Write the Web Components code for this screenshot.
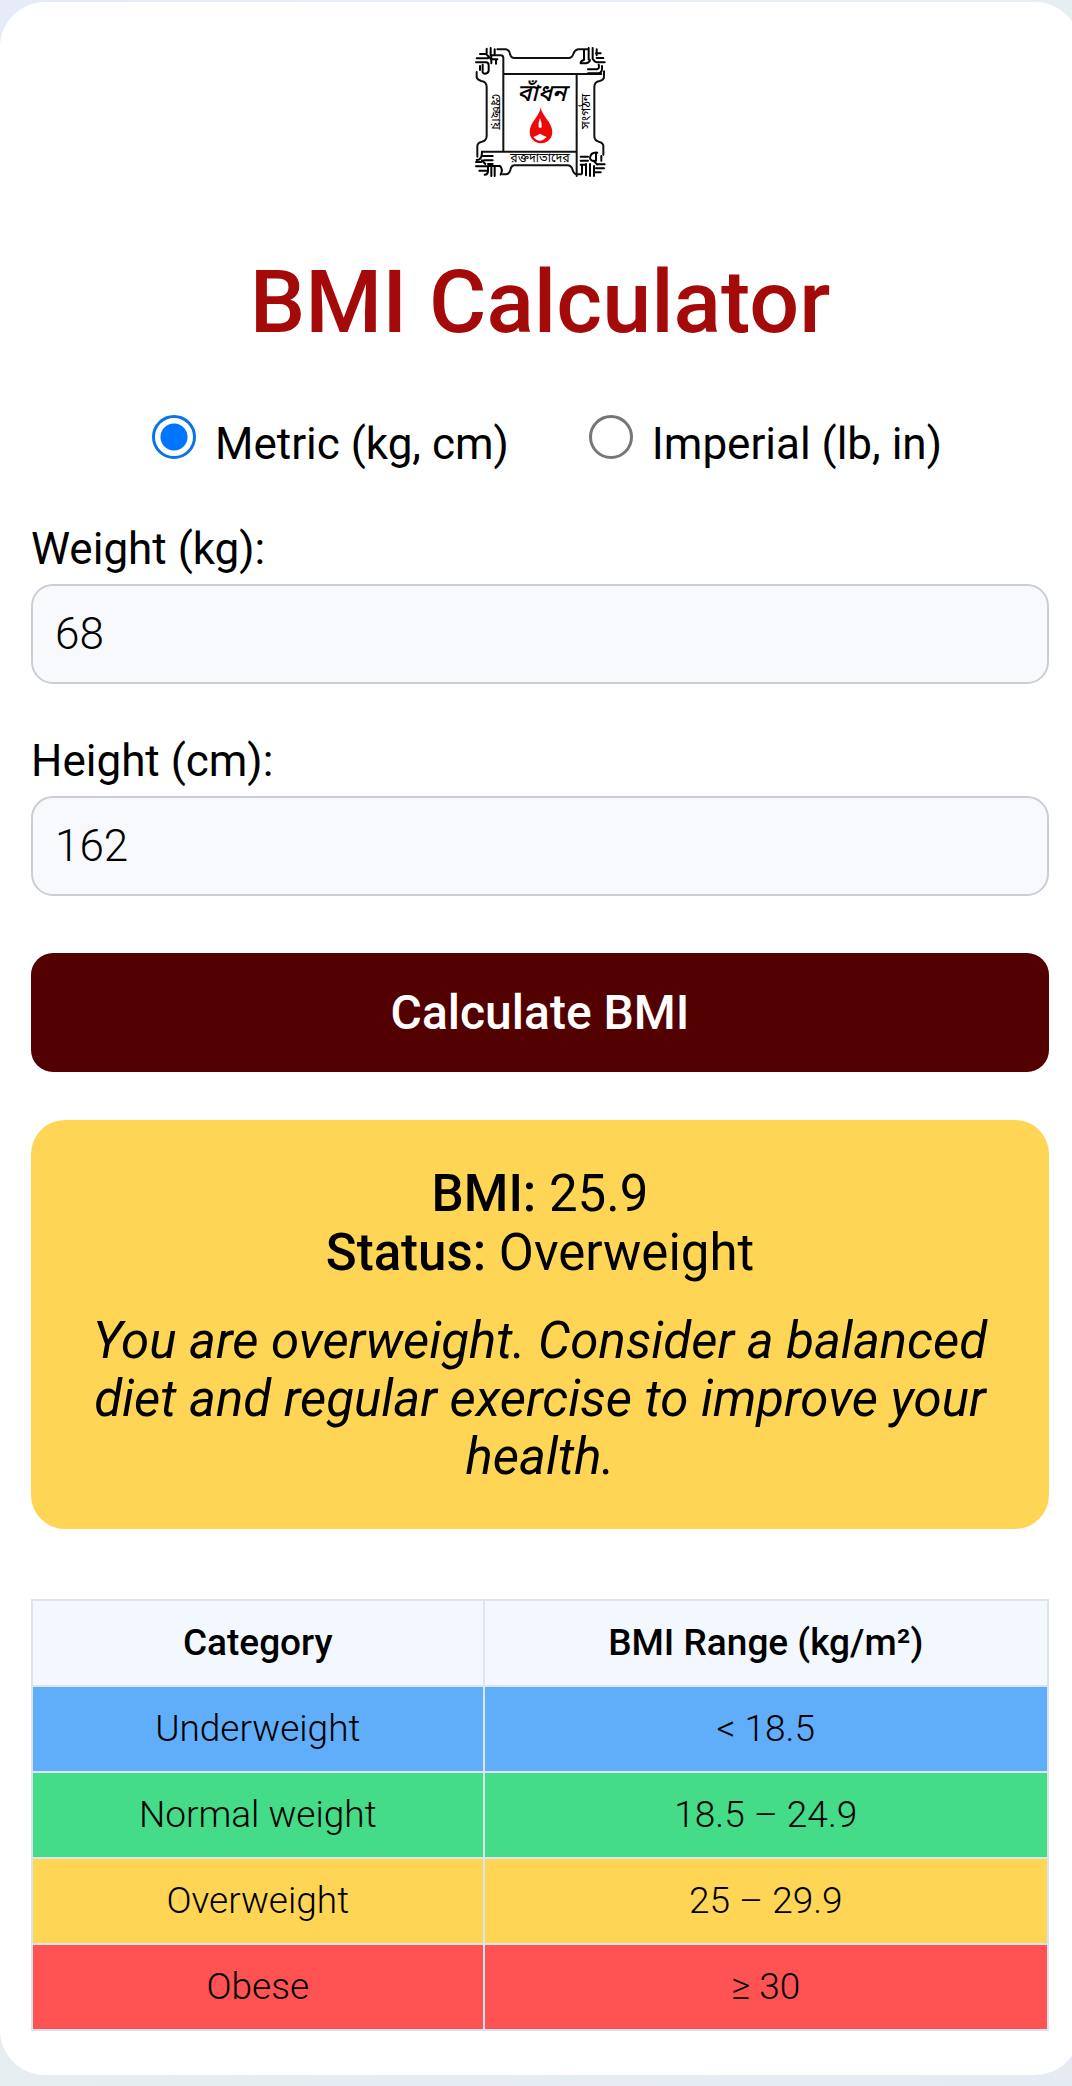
<!DOCTYPE html>
<html lang="en">
<head>
<meta charset="utf-8">
<title>BMI Calculator</title>
<style>
  html { background: linear-gradient(135deg, #e6ecf7, #e7eff0 50%, #e5ebf3); min-height: 100%; }
  body { margin: 0; font-family: Roboto, "Noto Sans", sans-serif; color: #000; overflow-x: hidden; }
</style>
</head>
<body>
<bmi-card>
  <bmi-logo slot="logo"></bmi-logo>
  <bmi-title>BMI Calculator</bmi-title>
  <unit-switch></unit-switch>
  <number-field label="Weight (kg):" value="68"></number-field>
  <number-field label="Height (cm):" value="162"></number-field>
  <calc-button>Calculate BMI</calc-button>
  <bmi-result bmi="25.9" status="Overweight">You are overweight. Consider a balanced diet and regular exercise to improve your health.</bmi-result>
  <bmi-table></bmi-table>
</bmi-card>
<script>
const define = (name, html, setup) => {
  const template = document.createElement('template');
  template.innerHTML = html;
  customElements.define(name, class extends HTMLElement {
    constructor() {
      super();
      this.attachShadow({ mode: 'open' }).append(template.content.cloneNode(true));
    }
    connectedCallback() { if (setup) setup(this, this.shadowRoot); }
  });
};

define('bmi-card', `
<style>
  :host { display: block; box-sizing: border-box; margin: 2px -8px 12px 0; padding: 28px 31px 44px; background: #fff; border-radius: 45px; }
  main { display: flex; flex-direction: column; }
</style>
<main><slot name="logo"></slot><slot></slot></main>`);

define('bmi-logo', `
<style>
  :host { display: flex; justify-content: center; }
  svg { display: block; width: 160px; height: 160px; }
  text { font-family: "Noto Sans Bengali", "Noto Serif Bengali", "Noto Sans", sans-serif; fill: #000; }
</style>
<svg viewBox="0 0 480 480" role="img" aria-label="Badhan">
  <g fill="none" stroke="#111" stroke-width="6" stroke-linejoin="round" stroke-linecap="round">
    <path d="M112 58H138Q148 60 150 72Q153 84 163 84H326Q336 84 340 72Q344 60 354 58H382"/>
    <path d="M50 126V142Q52 150 64 153Q80 156 80 170V318Q80 331 66 335Q52 338 52 348V380"/>
    <path d="M432 124V142Q431 150 419 153Q403 156 403 170V318Q403 331 416 335Q430 338 430 348V374"/>
    <path d="M128 433H138Q148 432 151 420Q154 406 164 406H322Q334 406 338 420Q341 433 352 433H364"/>
    <path d="M92 76H122Q130 76 130 84V365M130 132H424M350 132V438M350 365H66"/>
  </g>
  <g fill="none" stroke="#000" stroke-width="6" stroke-linecap="round" stroke-linejoin="round">
    <path d="M48 97H78Q86 97 86 106V122Q84 131 74 131Q66 130 68 120V104M50 85H84M60 72H78L90 84M80 56V70M92 54V76M104 58V74M92 88H112M94 100V76M108 101V90M60 108V120"/>
    <path d="M434 97H412Q404 96 398 86M430 84H410M422 70H408M410 58V76M398 54V84M386 54V88M372 60V90M372 90Q362 92 362 100H378Q388 98 390 90M384 118H410Q420 116 416 104M384 130H416Q428 128 426 108"/>
    <path d="M48 396H64M48 409H84M58 422H84M74 434Q84 434 84 422V409M94 438V408M104 438V408M122 434Q130 418 120 408H84M66 378H98M72 391H98M84 402H98M66 365Q66 390 50 390M66 391L76 402"/>
    <path d="M434 403H410M432 415H408M422 427H406M402 438V408M390 438V402M378 436V402M366 430V404M362 380H384M362 392H384M362 404H378M412 368Q392 366 390 384Q392 396 408 392V372M400 392L412 404M424 378V392"/>
  </g>
  <path fill="#f00808" d="M242 232C240 258 209 276 209 307A34 33 0 0 0 277 307C277 276 245 258 242 232Z"/>
  <path fill="#fff" d="M240 264Q246 278 245 292L241 294L236 292Q234 278 240 264ZM220 321Q232 317 240 311Q249 317 260 321Q250 332 240 332Q229 332 220 321Z"/>
  <text x="245" y="213" font-size="71" font-weight="500" font-style="italic" text-anchor="middle">বাঁধন</text>
  <text x="240" y="397" font-size="37" font-weight="400" text-anchor="middle">রক্তদাতাদের</text>
  <text transform="translate(95 245) rotate(90)" font-size="38" font-weight="400" text-anchor="middle">স্বেচ্ছায়</text>
  <text transform="translate(389 244) rotate(-90)" font-size="37" font-weight="400" text-anchor="middle">সংগঠন</text>
</svg>`);

define('bmi-title', `
<style>
  :host { display: block; margin-top: 60px; }
  h1 { margin: 0; font-size: 88px; line-height: 104px; font-weight: 500; text-align: center; color: #a50a0a; }
</style>
<h1><slot></slot></h1>`);

define('unit-switch', `
<style>
  :host { display: block; margin-top: 57px; }
  fieldset { margin: 0; padding: 0 0 0 14px; border: 0; display: flex; justify-content: center; gap: 80px; }
  label { display: flex; align-items: flex-start; gap: 19px; font-size: 44px; line-height: 56px; }
  span { padding-top: 5px; }
  input { appearance: none; box-sizing: border-box; flex: none; width: 44px; height: 44px; margin: 4px 0 0; border: 3px solid #767676; border-radius: 50%; background: #fff; }
  input:checked { border-color: #0a74e6; background: radial-gradient(circle, #0075ff 13px, #fff 14px); }
</style>
<fieldset aria-label="Units">
  <label><input type="radio" name="unit" checked><span>Metric (kg, cm)</span></label>
  <label><input type="radio" name="unit"><span>Imperial (lb, in)</span></label>
</fieldset>`);

define('number-field', `
<style>
  :host { display: block; margin-top: 47px; }
  label { display: block; margin-bottom: 4px; font-size: 44px; line-height: 61px; }
  input { display: block; box-sizing: border-box; width: 100%; height: 100px; margin: 0; padding: 0 22px; border: 2px solid #c9ced6; border-radius: 22px; background: #f8f9fc; font: 300 44px Roboto, sans-serif; color: #000; outline: 0; }
</style>
<label for="field"></label>
<input id="field" type="text" inputmode="decimal">`, (el, root) => {
  root.querySelector('label').textContent = el.getAttribute('label');
  root.querySelector('input').value = el.getAttribute('value');
});

define('calc-button', `
<style>
  :host { display: block; margin-top: 57px; }
  button { display: block; width: 100%; height: 119px; margin: 0; padding: 0; border: 0; border-radius: 22px; background: #520000; color: #fff; font: 500 48px Roboto, sans-serif; }
</style>
<button type="button"><slot></slot></button>`);

define('bmi-result', `
<style>
  :host { display: block; box-sizing: border-box; margin-top: 48px; padding: 44px 44px 43px; border-radius: 34px; background: #ffd555; text-align: center; font-size: 51px; line-height: 59px; }
  p { margin: 0; }
  .advice { margin-top: 30px; line-height: 58px; font-style: italic; }
  strong { font-weight: 500; }
</style>
<p><strong>BMI:</strong> <span id="bmi"></span></p>
<p><strong>Status:</strong> <span id="status"></span></p>
<p class="advice"><slot></slot></p>`, (el, root) => {
  root.querySelector('#bmi').textContent = el.getAttribute('bmi');
  root.querySelector('#status').textContent = el.getAttribute('status');
});

define('bmi-table', `
<style>
  :host { display: block; margin-top: 70px; }
  table { width: 100%; border-collapse: collapse; font-size: 37px; line-height: 44px; text-align: center; }
  th, td { padding: 20px 0; border: 2px solid #dbe5ee; }
  th { background: #f3f8fe; font-weight: 500; }
  th:first-child { width: calc(100% * 4 / 9); }
  td { font-weight: 300; }
  .under { background: #60adf9; }
  .normal { background: #44dc88; }
  .over { background: #ffd555; }
  .obese { background: #ff5353; }
</style>
<table>
  <thead><tr><th scope="col">Category</th><th scope="col">BMI Range (kg/m²)</th></tr></thead>
  <tbody>
    <tr class="under"><td>Underweight</td><td>&lt; 18.5</td></tr>
    <tr class="normal"><td>Normal weight</td><td>18.5 – 24.9</td></tr>
    <tr class="over"><td>Overweight</td><td>25 – 29.9</td></tr>
    <tr class="obese"><td>Obese</td><td>≥ 30</td></tr>
  </tbody>
</table>`);
</script>
</body>
</html>
